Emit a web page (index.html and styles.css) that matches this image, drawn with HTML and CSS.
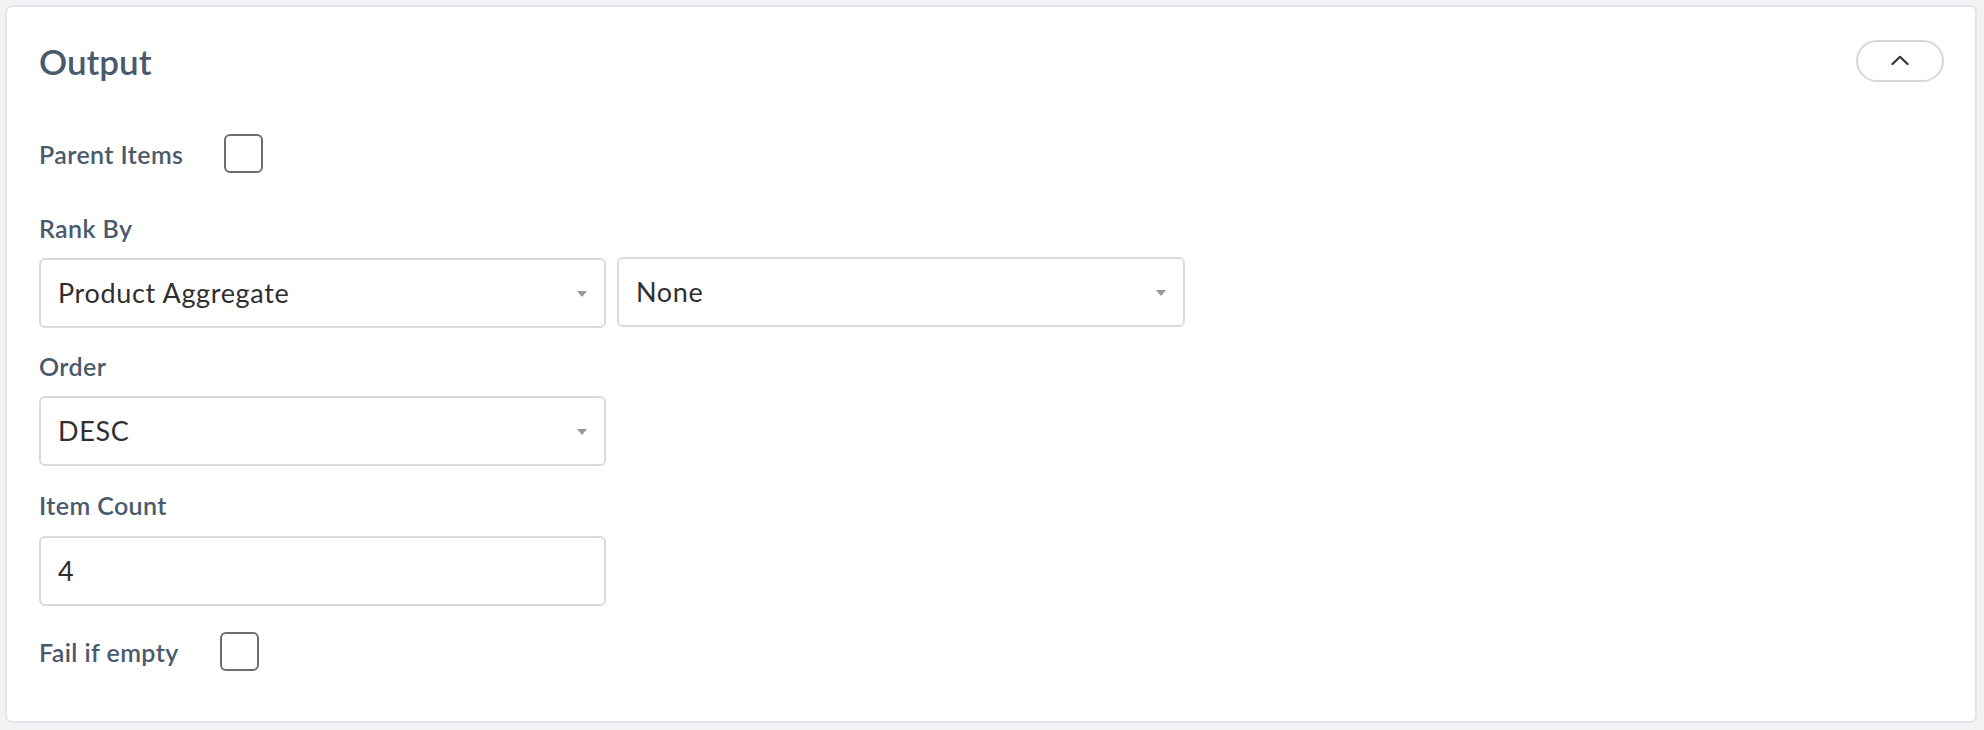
FILE: index.html
```html
<!DOCTYPE html>
<html>
<head>
<meta charset="utf-8">
<link rel="stylesheet" href="styles.css">
</head>
<body>
<section class="card">
  <header class="card-header">
    <h2 class="title">Output</h2>
    <button class="collapse-btn" type="button" aria-label="Collapse">
      <svg width="18" height="10" viewBox="0 0 18 10"><path d="M1.5 9 L9 1.8 L16.5 9" fill="none" stroke="#333" stroke-width="2.2" stroke-linecap="round" stroke-linejoin="round"/></svg>
    </button>
  </header>

  <div class="check-row first">
    <span class="label">Parent Items</span>
    <span class="checkbox"></span>
  </div>

  <div class="field rank">
    <div class="label">Rank By</div>
    <div class="control-row">
      <div class="select"><span class="value">Product Aggregate</span><span class="caret"></span></div>
      <div class="select second"><span class="value">None</span><span class="caret"></span></div>
    </div>
  </div>

  <div class="field">
    <div class="label">Order</div>
    <div class="control-row">
      <div class="select"><span class="value">DESC</span><span class="caret"></span></div>
    </div>
  </div>

  <div class="field count">
    <div class="label">Item Count</div>
    <div class="control-row">
      <div class="input"><span class="value">4</span></div>
    </div>
  </div>

  <div class="check-row last">
    <span class="label">Fail if empty</span>
    <span class="checkbox"></span>
  </div>
</section>
</body>
</html>
```

FILE: styles.css
```css
* { box-sizing: border-box; }
html, body { margin: 0; padding: 0; }
body {
  background: #f2f2f4;
  padding: 5px 7px 0 5px;
  font-family: Lato, "Open Sans", sans-serif;
}
.card {
  width: 1972px;
  height: 718px;
  background: #ffffff;
  border: 2px solid #e3e3e8;
  border-radius: 7px;
  padding: 33px 31px 0 32px;
}
.card-header {
  display: flex;
  align-items: center;
  justify-content: space-between;
  height: 42px;
}
.title {
  margin: 0;
  font-size: 35px;
  line-height: 42px;
  font-weight: 600;
  color: #4a5a6d;
}
.collapse-btn {
  width: 88px;
  height: 42px;
  border: 2px solid #d3d7dc;
  border-radius: 21px;
  background: #fff;
  display: flex;
  align-items: center;
  justify-content: center;
  padding: 0 0 2px 0;
}
.label {
  font-size: 25px;
  line-height: 30px;
  font-weight: 600;
  letter-spacing: 0.4px;
  color: #4a5a6d;
}
.check-row {
  display: flex;
  align-items: center;
  gap: 41px;
}
.check-row.first { margin-top: 52px; }
.check-row.last { margin-top: 26px; }
.checkbox {
  width: 39px;
  height: 39px;
  border: 2px solid #6e6e6e;
  border-radius: 6px;
  background: #fff;
}
.field { margin-top: 23px; }
.field.rank { margin-top: 40px; }
.field.count { margin-top: 24px; }
.control-row {
  display: flex;
  gap: 11px;
  margin-top: 15px;
}
.field.count .control-row { margin-top: 16px; }
.select, .input {
  width: 567px;
  height: 70px;
  border: 2px solid #d8dbe0;
  border-radius: 6px;
  display: flex;
  align-items: center;
  justify-content: space-between;
  padding: 0 17px 0 17px;
  background: #fff;
}
.select.second { margin-top: -1px; width: 568px; }
.value {
  font-size: 27px;
  font-weight: 400;
  letter-spacing: 0.65px;
  color: #2f2f2f;
  line-height: 32px;
}
.caret {
  width: 0;
  height: 0;
  border-left: 5.5px solid transparent;
  border-right: 5.5px solid transparent;
  border-top: 6px solid #9a9a9a;
  margin-top: 2px;
}
```
